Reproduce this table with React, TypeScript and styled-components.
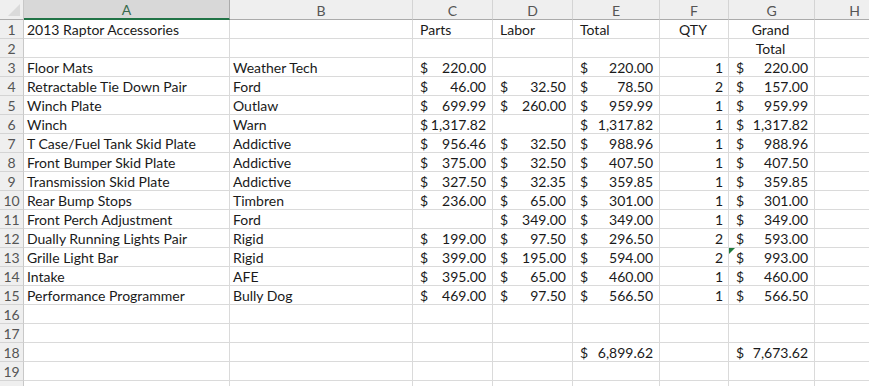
import styled, { createGlobalStyle } from 'styled-components';

interface Item {
    name: string;
    brand: string;
    parts?: string;
    labor?: string;
    total: string;
    qty: number;
    grand: string;
    flag?: boolean;
}

const items: Item[] = [
    { name: 'Floor Mats', brand: 'Weather Tech', parts: '220.00', total: '220.00', qty: 1, grand: '220.00' },
    { name: 'Retractable Tie Down Pair', brand: 'Ford', parts: '46.00', labor: '32.50', total: '78.50', qty: 2, grand: '157.00' },
    { name: 'Winch Plate', brand: 'Outlaw', parts: '699.99', labor: '260.00', total: '959.99', qty: 1, grand: '959.99' },
    { name: 'Winch', brand: 'Warn', parts: '1,317.82', total: '1,317.82', qty: 1, grand: '1,317.82' },
    { name: 'T Case/Fuel Tank Skid Plate', brand: 'Addictive', parts: '956.46', labor: '32.50', total: '988.96', qty: 1, grand: '988.96' },
    { name: 'Front Bumper Skid Plate', brand: 'Addictive', parts: '375.00', labor: '32.50', total: '407.50', qty: 1, grand: '407.50' },
    { name: 'Transmission Skid Plate', brand: 'Addictive', parts: '327.50', labor: '32.35', total: '359.85', qty: 1, grand: '359.85' },
    { name: 'Rear Bump Stops', brand: 'Timbren', parts: '236.00', labor: '65.00', total: '301.00', qty: 1, grand: '301.00' },
    { name: 'Front Perch Adjustment', brand: 'Ford', labor: '349.00', total: '349.00', qty: 1, grand: '349.00' },
    { name: 'Dually Running Lights Pair', brand: 'Rigid', parts: '199.00', labor: '97.50', total: '296.50', qty: 2, grand: '593.00' },
    { name: 'Grille Light Bar', brand: 'Rigid', parts: '399.00', labor: '195.00', total: '594.00', qty: 2, grand: '993.00', flag: true },
    { name: 'Intake', brand: 'AFE', parts: '395.00', labor: '65.00', total: '460.00', qty: 1, grand: '460.00' },
    { name: 'Performance Programmer', brand: 'Bully Dog', parts: '469.00', labor: '97.50', total: '566.50', qty: 1, grand: '566.50' },
];

const columns = ['A', 'B', 'C', 'D', 'E', 'F', 'G', 'H'];

function Money({ value, flag }: { value?: string; flag?: boolean }) {
    return (
        <MoneyCell>
            {flag && <ErrorMark />}
            {value && (
                <>
                    <span>$</span>
                    <span>{value}</span>
                </>
            )}
        </MoneyCell>
    );
}

function EmptyRow({ label }: { label?: number }) {
    return (
        <Row>
            <RowHeader>{label}</RowHeader>
            {columns.map(c => <Cell key={c} />)}
        </Row>
    );
}

function App(): JSX.Element {
    return (
        <>
            <GlobalStyle />
            <Sheet>
                <Corner>
                    <CornerArrow />
                </Corner>
                {columns.map(c => (
                    <ColHeader key={c} $selected={c === 'A'}>{c}</ColHeader>
                ))}

                <RowHeader>1</RowHeader>
                <Cell>2013 Raptor Accessories</Cell>
                <Cell />
                <Cell $indent>Parts</Cell>
                <Cell $indent>Labor</Cell>
                <Cell $indent>Total</Cell>
                <Cell $align="center">QTY</Cell>
                <Cell $align="center">Grand</Cell>
                <Cell />

                <RowHeader>2</RowHeader>
                <Cell />
                <Cell />
                <Cell />
                <Cell />
                <Cell />
                <Cell />
                <Cell $align="center">Total</Cell>
                <Cell />

                {items.map((item, i) => (
                    <Row key={item.name}>
                        <RowHeader>{i + 3}</RowHeader>
                        <Cell>{item.name}</Cell>
                        <Cell>{item.brand}</Cell>
                        <Money value={item.parts} />
                        <Money value={item.labor} />
                        <Money value={item.total} />
                        <Cell $align="right">{item.qty}</Cell>
                        <Money value={item.grand} flag={item.flag} />
                        <Cell />
                    </Row>
                ))}

                <EmptyRow label={16} />
                <EmptyRow label={17} />

                <RowHeader>18</RowHeader>
                <Cell />
                <Cell />
                <Cell />
                <Cell />
                <Money value="6,899.62" />
                <Cell />
                <Money value="7,673.62" />
                <Cell />

                <EmptyRow label={19} />
                <EmptyRow />
            </Sheet>
        </>
    );
}

const GlobalStyle = createGlobalStyle`
  html, body {
    margin: 0;
    padding: 0;
    background: #ffffff;
    overflow: hidden;
  }
  body {
    font-family: Lato, "Open Sans", sans-serif;
  }
`;

const Sheet = styled.div`
  display: grid;
  grid-template-columns: 24px 206px 183px 80px 80px 87px 69px 86px 80px;
  grid-template-rows: 20px;
  grid-auto-rows: 19px;
  width: 895px;
  font-size: 14px;
  color: #1a1a1a;
`;

const Row = styled.div`
  display: contents;
`;

const Corner = styled.div`
  position: relative;
  background: #efefef;
  border-right: 1px solid #c8c8c8;
  border-bottom: 1px solid #ababab;
`;

const CornerArrow = styled.div`
  position: absolute;
  right: 3px;
  bottom: 3px;
  width: 0;
  height: 0;
  border-left: 12px solid transparent;
  border-bottom: 12px solid #dadada;
`;

const ColHeader = styled.div<{ $selected?: boolean }>`
  display: flex;
  align-items: center;
  justify-content: center;
  background: ${p => (p.$selected ? '#d8d8d8' : '#efefef')};
  color: ${p => (p.$selected ? '#3a6a4e' : '#555')};
  border-right: 1px solid ${p => (p.$selected ? '#ababab' : '#d4d4d4')};
  border-bottom: ${p => (p.$selected ? '2px solid #217346' : '1px solid #ababab')};
  font-size: 14px;
  padding-top: 1px;
`;

const RowHeader = styled.div`
  display: flex;
  align-items: center;
  justify-content: center;
  background: #efefef;
  color: #555;
  border-right: 1px solid #c8c8c8;
  border-bottom: 1px solid #d4d4d4;
  font-size: 14px;
`;

const Cell = styled.div<{ $align?: 'left' | 'center' | 'right'; $indent?: boolean }>`
  display: flex;
  align-items: center;
  justify-content: ${p => (p.$align === 'center' ? 'center' : p.$align === 'right' ? 'flex-end' : 'flex-start')};
  padding: 0 5px 0 ${p => (p.$indent ? '7px' : '3px')};
  border-right: 1px solid #dadada;
  border-bottom: 1px solid #dadada;
  white-space: nowrap;
  overflow: hidden;
`;

const MoneyCell = styled(Cell)`
  position: relative;
  justify-content: space-between;
  padding: 0 6px 0 7px;
  overflow: visible;
`;

const ErrorMark = styled.div`
  position: absolute;
  left: 0;
  top: 0;
  width: 0;
  height: 0;
  border-top: 6px solid #1e7a3c;
  border-right: 6px solid transparent;
`;

export default App;
